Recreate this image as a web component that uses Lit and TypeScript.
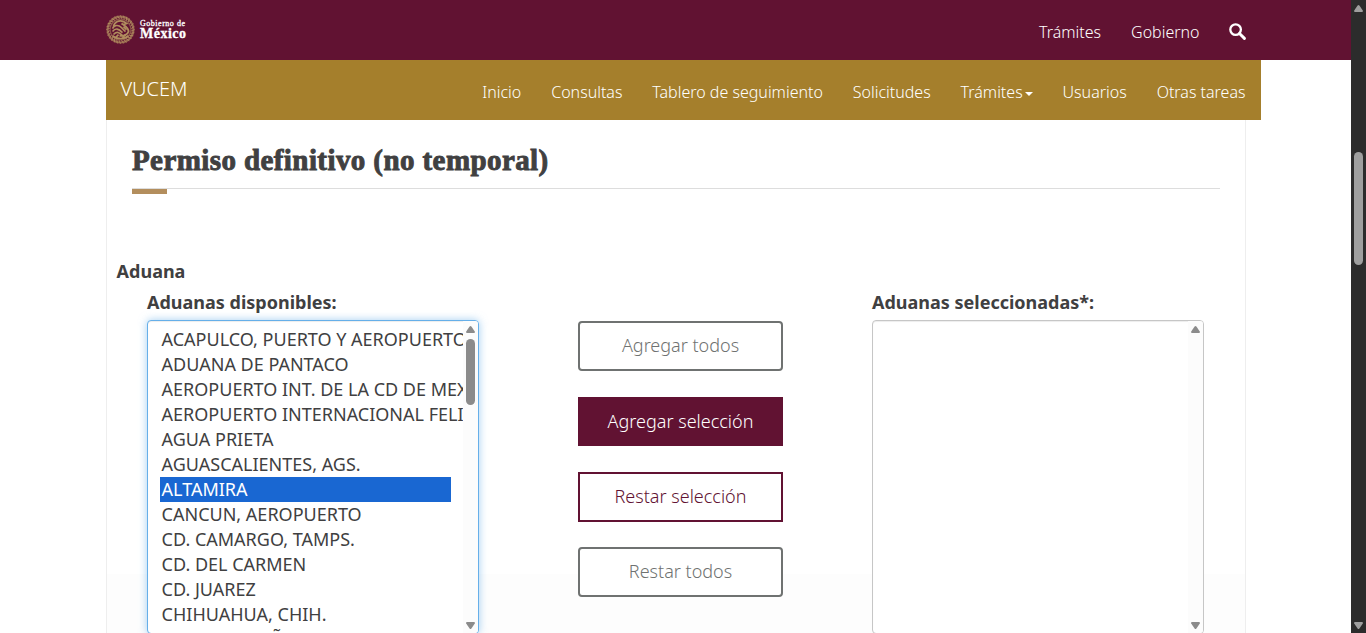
import { LitElement, html, css, svg } from "lit";
import { customElement, property } from "lit/decorators.js";
import { classMap } from "lit/directives/class-map.js";

const ADUANAS = [
  "ACAPULCO, PUERTO Y AEROPUERTO",
  "ADUANA DE PANTACO",
  "AEROPUERTO INT. DE LA CD DE MEXICO",
  "AEROPUERTO INTERNACIONAL FELIPE ANGELES",
  "AGUA PRIETA",
  "AGUASCALIENTES, AGS.",
  "ALTAMIRA",
  "CANCUN, AEROPUERTO",
  "CD. CAMARGO, TAMPS.",
  "CD. DEL CARMEN",
  "CD. JUAREZ",
  "CHIHUAHUA, CHIH.",
  "CIUDAD ACUÑA",
];

const arrowUp = html`<svg class="arrow" width="9" height="7" viewBox="0 0 9 7"><path d="M3.6.6Q4.5-.5 5.4.6L8.8 5.6Q9.2 7 8 7H1Q-.2 7 .2 5.6Z" /></svg>`;
const arrowDown = html`<svg class="arrow" width="9" height="7" viewBox="0 0 9 7"><path d="M3.6 6.4Q4.5 7.5 5.4 6.4L8.8 1.4Q9.2 0 8 0H1Q-.2 0 .2 1.4Z" /></svg>`;

@customElement("aduana-list")
export class AduanaList extends LitElement {
  @property({ type: Array }) items: string[] = [];
  @property() selected = "";
  @property({ type: Boolean, reflect: true }) focused = false;

  static styles = css`
    :host {
      display: flex;
      box-sizing: border-box;
      width: 332px;
      height: 314px;
      border: 1px solid #c6c6c6;
      border-radius: 4px;
      background: #fff;
      box-shadow: inset 0 1px 1px rgba(0, 0, 0, 0.075);
      overflow: hidden;
    }
    :host([focused]) {
      border-color: #66afe9;
      box-shadow: inset 0 1px 1px rgba(0, 0, 0, 0.075), 0 0 8px rgba(102, 175, 233, 0.6);
    }
    .options {
      flex: 1;
      min-width: 0;
      overflow: hidden;
      padding: 6px 12px;
    }
    .option {
      height: 25px;
      line-height: 25px;
      padding: 0 1.6px;
      white-space: nowrap;
    }
    .on {
      background: #1967d2;
      color: #fff;
    }
    .bar {
      width: 15px;
      box-sizing: border-box;
      background: #fcfcfc;
      display: flex;
      flex-direction: column;
      align-items: center;
      padding: 5px 0 4px;
    }
    .arrow {
      display: block;
      fill: #8b8b8b;
      flex: none;
    }
    .track {
      flex: 1;
      padding-top: 6px;
    }
    .thumb {
      width: 9px;
      height: 66px;
      border-radius: 5px;
      background: #8b8b8b;
    }
  `;

  render() {
    return html`
      <div class="options">
        ${this.items.map(
          (i) => html`<div class=${classMap({ option: true, on: i === this.selected })}>${i}</div>`
        )}
      </div>
      <div class="bar">
        ${arrowUp}
        <div class="track">${this.items.length ? html`<div class="thumb"></div>` : ""}</div>
        ${arrowDown}
      </div>
    `;
  }
}

@customElement("app-root")
export class AppRoot extends LitElement {
  static styles = css`
    :host {
      display: flex;
      height: 633px;
      overflow: hidden;
      background: #fff;
      color: #404041;
      font-family: "Noto Sans", sans-serif;
      font-size: 18px;
    }
    .page {
      flex: 1;
      min-width: 0;
    }
    .gob {
      height: 60px;
      box-sizing: border-box;
      background: #611232;
      color: #fff;
      display: flex;
      justify-content: space-between;
      align-items: center;
      padding: 0 105.5px 0 106px;
    }
    .brand {
      display: flex;
      align-items: center;
      gap: 5px;
    }
    .seal {
      display: block;
    }
    .name {
      font-family: "Liberation Serif", serif;
      font-weight: bold;
      display: flex;
      flex-direction: column;
      padding-bottom: 1px;
    }
    .small {
      font-size: 8px;
      line-height: 8px;
      letter-spacing: 0.52px;
      font-weight: normal;
      -webkit-text-stroke: 0.3px #fff;
    }
    .big {
      font-size: 14px;
      line-height: 11px;
      letter-spacing: 0.5px;
      -webkit-text-stroke: 0.3px #fff;
    }
    .menu {
      display: flex;
      gap: 30px;
      font-size: 16px;
      font-weight: 300;
      white-space: nowrap;
      line-height: 24px;
    }
    .gob .menu {
      padding-top: 4px;
    }
    .glass {
      display: block;
      margin: 2.5px 0 0 -1px;
    }
    .vucem {
      width: 1155px;
      height: 60px;
      box-sizing: border-box;
      margin-left: 106px;
      padding: 0 15.5px 0 14.4px;
      background: #a57f2c;
      color: #fff;
      display: flex;
      justify-content: space-between;
      align-items: center;
    }
    .title {
      font-size: 20px;
      font-weight: 300;
      line-height: 28px;
      padding-bottom: 3px;
    }
    .vucem .menu {
      gap: 29.92px;
      padding-top: 4px;
    }
    .caret {
      display: inline-block;
      margin-left: 2px;
      vertical-align: middle;
      border-top: 4px solid #fff;
      border-left: 4px solid transparent;
      border-right: 4px solid transparent;
    }
    .content {
      width: 1140px;
      height: 513px;
      box-sizing: border-box;
      margin-left: 106px;
      border: solid #eee;
      border-width: 0 1px;
      padding: 22px 25px 0;
      background: linear-gradient(#fff 454px, #fdfdfd 454px);
    }
    .heading {
      margin: 0;
      height: 46px;
      border-bottom: 1px solid #ddd;
      font-family: "Liberation Serif", serif;
      font-size: 29px;
      line-height: 36px;
      font-weight: bold;
      letter-spacing: 0.41px;
      -webkit-text-stroke: 0.9px #404041;
      white-space: nowrap;
    }
    .accent {
      width: 35px;
      height: 5px;
      background: #b38e5d;
    }
    .label {
      font-weight: 700;
      line-height: 25px;
      white-space: nowrap;
    }
    .aduana {
      margin: 65px 0 0 -15.4px;
    }
    .columns {
      display: flex;
      margin-left: 30.4px;
      padding-top: 6px;
    }
    .col {
      flex: none;
      width: 332px;
    }
    .col .label {
      padding-bottom: 5px;
    }
    .buttons {
      flex: none;
      width: 205px;
      margin: 31.2px 89px 0 99px;
      display: flex;
      flex-direction: column;
      gap: 25.7px;
    }
    .btn {
      box-sizing: border-box;
      height: 49.7px;
      border: 2px solid #6f7271;
      border-radius: 4px;
      background: #fff;
      color: #6f7271;
      font: 300 18px/44px "Noto Sans", sans-serif;
      padding: 0 0 2.2px;
      text-align: center;
    }
    .fill {
      border-color: #611232;
      border-radius: 0;
      background: #611232;
      color: #fff;
      padding-bottom: 1px;
    }
    .line {
      border-color: #611232;
      border-radius: 0;
      color: #611232;
      padding-bottom: 1px;
    }
    .scroll {
      width: 15px;
      box-sizing: border-box;
      background: #2c2c2c;
      display: flex;
      flex-direction: column;
      align-items: center;
      padding: 5px 0 4px;
    }
    .arrow {
      display: block;
      fill: #9f9f9f;
      flex: none;
    }
    .track {
      flex: 1;
      padding-top: 140px;
    }
    .thumb {
      width: 9px;
      height: 113px;
      border-radius: 5px;
      background: #9f9f9f;
    }
  `;

  private seal() {
    const leaves = Array.from({ length: 28 }, (_, i) => (i * 360) / 28);
    return html`<svg class="seal" width="29" height="30" viewBox="0 0 29 30">
      <g transform="translate(14.5 14.6)" fill="none" stroke="#b08d5e">
        <circle r="12.9" stroke-width="2.2" opacity=".7" />
        <circle r="10.4" stroke-width="1.2" opacity=".5" />
        ${leaves.map(
          (a) => svg`<path d="M0 -14.2L1.4 -10.6" stroke-width=".8" transform="rotate(${a})" />`
        )}
        <path d="M-7-3C-6-8-1-10 3-8L6-6 3-5 1-6C4-4 8-2 8 2C7 5 3 7-1 6" stroke-width="1.8" />
        <path d="M-8-1C-6-5-2-5 1-2L5 2M-8 2C-5-2-2-1 2 3M-7 5C-4 1-1 3 2 6" stroke-width="1.6" />
        <path d="M-8 6C-4 10 4 10 8 6M-5 8L-2 5M2 8L5 5M3-3L6 0" stroke-width="1.7" />
      </g>
    </svg>`;
  }

  render() {
    return html`
      <div class="page">
        <header class="gob">
          <div class="brand">
            ${this.seal()}
            <div class="name"><span class="small">Gobierno de</span><span class="big">México</span></div>
          </div>
          <nav class="menu">
            <span>Trámites</span><span>Gobierno</span>
            <svg class="glass" width="17" height="17" viewBox="0 0 17 17" fill="none" stroke="#fff">
              <circle cx="6.6" cy="6.6" r="5.3" stroke-width="2.3" />
              <path d="M10.5 10.5L15.4 15.4" stroke-width="2.9" stroke-linecap="round" />
            </svg>
          </nav>
        </header>
        <div class="vucem">
          <span class="title">VUCEM</span>
          <nav class="menu">
            <span>Inicio</span><span>Consultas</span><span>Tablero de seguimiento</span>
            <span>Solicitudes</span><span>Trámites<i class="caret"></i></span>
            <span>Usuarios</span><span>Otras tareas</span>
          </nav>
        </div>
        <main class="content">
          <h2 class="heading">Permiso definitivo (no temporal)</h2>
          <div class="accent"></div>
          <section class="aduana">
            <div class="label">Aduana</div>
            <div class="columns">
              <div class="col">
                <div class="label">Aduanas disponibles:</div>
                <aduana-list .items=${ADUANAS} selected="ALTAMIRA" focused></aduana-list>
              </div>
              <div class="buttons">
                <button class="btn">Agregar todos</button>
                <button class="btn fill">Agregar selección</button>
                <button class="btn line">Restar selección</button>
                <button class="btn">Restar todos</button>
              </div>
              <div class="col">
                <div class="label">Aduanas seleccionadas*:</div>
                <aduana-list></aduana-list>
              </div>
            </div>
          </section>
        </main>
      </div>
      <div class="scroll">
        ${arrowUp}
        <div class="track"><div class="thumb"></div></div>
        ${arrowDown}
      </div>
    `;
  }
}
